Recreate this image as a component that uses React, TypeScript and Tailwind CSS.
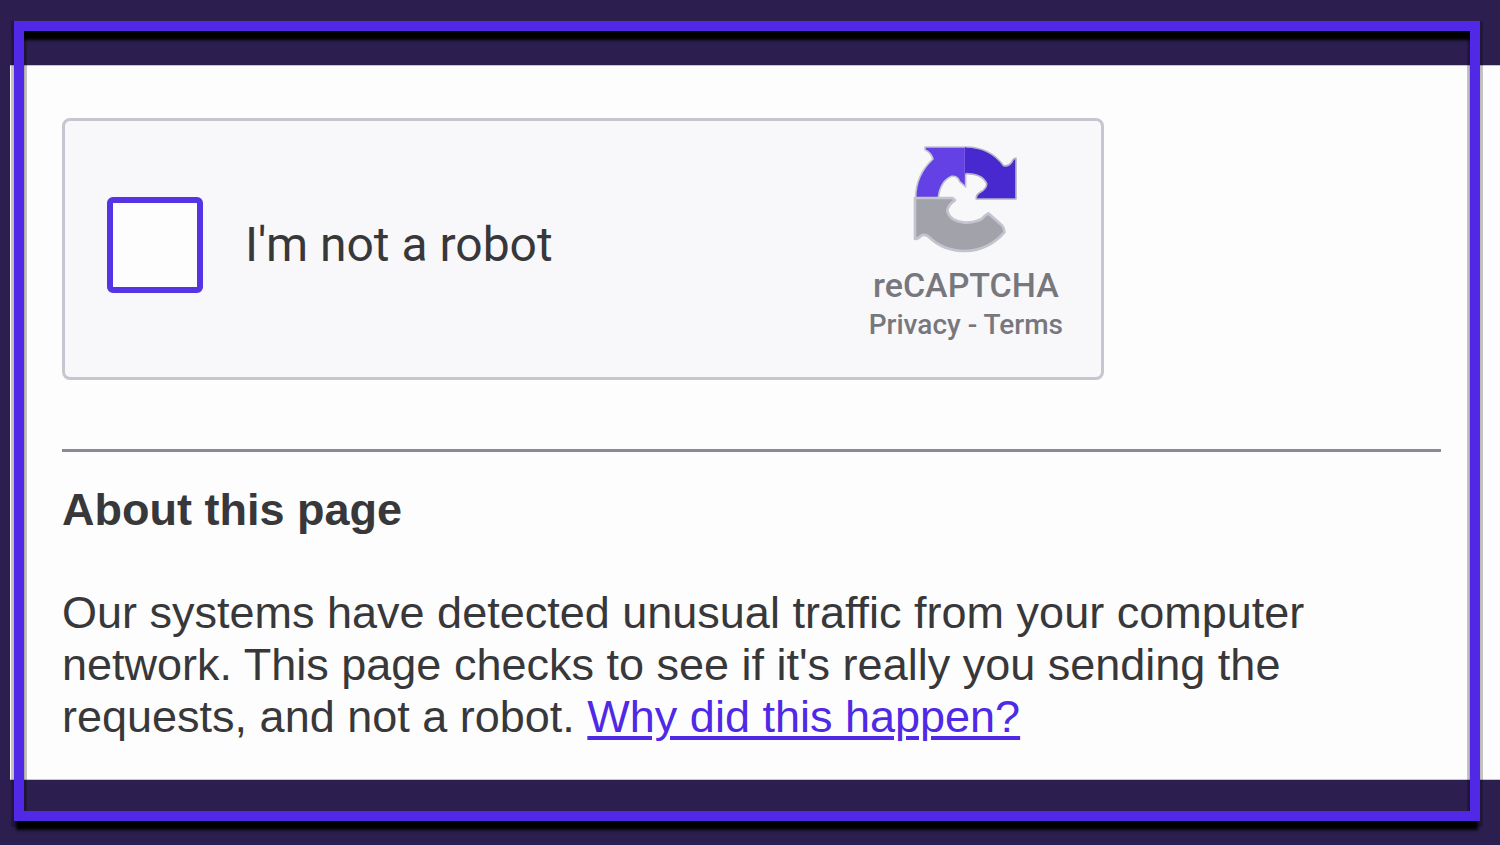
import React from "react";

function RecaptchaLogo() {
  return (
    <svg viewBox="190 70 315 324" className="h-[108px] w-[105px]" aria-hidden="true">
      <g strokeLinejoin="round">
        <path
          d="M196 229 L196 352 Q206 352 214 342 Q226 336 238 346 Q280 388 348 388 Q416 386 464 332 Q464 314 450 305 L416 275 Q404 282 396 292 Q372 304 345 303 Q300 298 293 268 Q294 250 316 236 L308 229 Z"
          fill="#a2a2aa"
          stroke="#c4c4ce"
          strokeWidth="8"
        />
        <path
          d="M226 76 L348 76 L348 196 L330 180 Q324 162 306 164 Q272 178 266 228 L198 228 Q198 160 250 112 Q244 92 226 84 Z"
          fill="#6341e4"
          stroke="#c4c4ce"
          strokeWidth="5"
        />
        <path
          d="M346 76 Q420 76 462 132 Q476 136 486 122 Q492 108 499 110 L499 232 L380 232 Q378 220 392 212 Q412 200 411 186 Q398 156 346 156 Z"
          fill="#4729cf"
        />
        <path
          d="M348 76 Q420 76 462 132 Q476 136 486 122 Q492 108 499 110 L499 232 L380 232 Q378 220 392 212 Q412 200 411 186 Q398 156 348 156"
          fill="none"
          stroke="#b4b4c4"
          strokeWidth="5"
        />
      </g>
    </svg>
  );
}

function CaptchaCard() {
  return (
    <section className="flex h-[262px] w-full max-w-[1042px] items-center rounded-lg border-3 border-[#c6c6d1] bg-[#f8f8fa] pr-[38px] pb-2 pl-[42px]">
      <input
        id="robot"
        type="checkbox"
        className="size-24 shrink-0 appearance-none rounded-md border-6 border-[#5534e3] bg-[#fdfdfd] checked:bg-[#5534e3]"
      />
      <label
        htmlFor="robot"
        className="ml-[42px] text-[48px] leading-[56px] whitespace-nowrap text-[#38383a] [font-family:Roboto,sans-serif]"
      >
        I'm not a robot
      </label>
      <div className="ml-auto flex flex-col items-center text-[#77777d] [font-family:Roboto,sans-serif]">
        <RecaptchaLogo />
        <span className="mt-3 text-[34px] leading-10 font-medium">reCAPTCHA</span>
        <span className="text-[28px] leading-10 font-medium">
          <a href="#privacy">Privacy</a> - <a href="#terms">Terms</a>
        </span>
      </div>
    </section>
  );
}

export default function App() {
  return (
    <div className="relative min-h-screen bg-[#2c1f50] py-[65px]">
      <main className="ml-[10px] border-y border-[#c8bfe3] bg-[#fdfdfd] pt-[52px] pr-[59px] pb-[36px] pl-[52px] text-[45px] leading-[52px] text-[#38383a] [font-family:'Liberation_Sans',Arial,sans-serif]">
        <CaptchaCard />
        <hr className="mt-[69px] border-t-3 border-[#8c8998]" />
        <h1 className="mt-8 font-bold">About this page</h1>
        <p className="mt-[51px] max-w-[1300px]">
          Our systems have detected unusual traffic from your computer network. This page checks to see if it's
          really you sending the requests, and not a robot.{" "}
          <a href="#why" className="text-[#4f29e5] underline decoration-4 underline-offset-4">
            Why did this happen?
          </a>
        </p>
      </main>
      <div className="pointer-events-none absolute top-[21px] right-5 bottom-6 left-[14px] border-10 border-[#5028e5] shadow-[0_11px_3px_-2px_#000000,0_3px_0_3px_#00000038,inset_0_10px_3px_-1px_#000000,inset_0_3px_0_3px_#00000038]" />
    </div>
  );
}
